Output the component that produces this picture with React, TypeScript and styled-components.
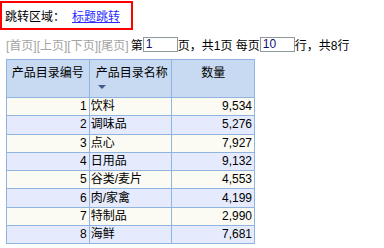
import React from 'react';
import styled, { createGlobalStyle } from 'styled-components';

const GlobalStyle = createGlobalStyle`
    body {
        margin: 0;
        background: #ffffff;
        font-family: "Liberation Sans", "Noto Sans CJK SC", sans-serif;
        font-size: 12px;
        color: #000;
    }
`;

const Page = styled.div`
    display: flex;
    flex-direction: column;
    padding-top: 1px;
`;

const JumpBox = styled.div`
    display: flex;
    align-items: center;
    gap: 7px;
    width: 126px;
    height: 25px;
    padding-left: 3px;
    border: 2px solid #ff0000;
`;

const JumpLink = styled.a`
    color: #2a2aff;
    text-decoration: underline;
    cursor: pointer;
`;

const Pager = styled.div`
    display: flex;
    align-items: center;
    height: 16px;
    margin: 6px 0 0 6px;
    white-space: pre;
`;

const PagerLink = styled.span`
    color: #a3a3a3;
    margin-right: 2px;
`;

const PagerInput = styled.input`
    width: 29px;
    height: 13px;
    padding: 0 2px;
    margin: 0;
    border: 1px solid #8f9a9a;
    font-family: "Liberation Sans", sans-serif;
    font-size: 12px;
    color: #101070;
    outline: none;
`;

const Grid = styled.table`
    border-collapse: collapse;
    margin: 7px 0 0 6px;
    table-layout: fixed;
    width: 249px;
`;

const HeadCell = styled.th`
    width: 33.33%;
    height: 31px;
    padding: 6px 0 0;
    vertical-align: top;
    background: #c8daf1;
    border: 1px solid #8fb4e0;
    font-weight: normal;
    text-align: center;
    line-height: 14px;
`;

const SortHead = styled.div`
    display: flex;
    flex-direction: column;
    align-items: flex-start;
    padding-left: 6px;
`;

const SortArrow = styled.span`
    margin: 5px 0 0 2px;
    width: 0;
    height: 0;
    border-left: 4px solid transparent;
    border-right: 4px solid transparent;
    border-top: 4px solid #3e5b88;
`;

const Row = styled.tr<{ $alt: boolean }>`
    background: ${(p) => (p.$alt ? '#e5ebfd' : '#fbfaf3')};
`;

const Cell = styled.td<{ $align: 'left' | 'right' }>`
    height: 17.3px;
    padding: 0 2px 0 1px;
    border: 1px solid #8fb4e0;
    text-align: ${(p) => p.$align};
    line-height: 17px;
    white-space: nowrap;
`;

const rows = [
    { id: 1, name: '饮料', qty: '9,534' },
    { id: 2, name: '调味品', qty: '5,276' },
    { id: 3, name: '点心', qty: '7,927' },
    { id: 4, name: '日用品', qty: '9,132' },
    { id: 5, name: '谷类/麦片', qty: '4,553' },
    { id: 6, name: '肉/家禽', qty: '4,199' },
    { id: 7, name: '特制品', qty: '2,990' },
    { id: 8, name: '海鲜', qty: '7,681' },
];

const App: React.FunctionComponent = () => {
    return (
        <Page>
            <GlobalStyle />
            <JumpBox>
                <span>跳转区域：</span>
                <JumpLink>标题跳转</JumpLink>
            </JumpBox>
            <Pager>
                <PagerLink>[首页][上页][下页][尾页]</PagerLink>
                <span>第</span>
                <PagerInput defaultValue="1" />
                <span>页，共1页 每页</span>
                <PagerInput defaultValue="10" />
                <span>行，共8行</span>
            </Pager>
            <Grid>
                <thead>
                    <tr>
                        <HeadCell>产品目录编号</HeadCell>
                        <HeadCell>
                            <SortHead>
                                <span>产品目录名称</span>
                                <SortArrow />
                            </SortHead>
                        </HeadCell>
                        <HeadCell>数量</HeadCell>
                    </tr>
                </thead>
                <tbody>
                    {rows.map((row, index) => (
                        <Row key={`row-${row.id}`} $alt={index % 2 === 1}>
                            <Cell $align="right">{row.id}</Cell>
                            <Cell $align="left">{row.name}</Cell>
                            <Cell $align="right">{row.qty}</Cell>
                        </Row>
                    ))}
                </tbody>
            </Grid>
        </Page>
    );
};

export default App;
